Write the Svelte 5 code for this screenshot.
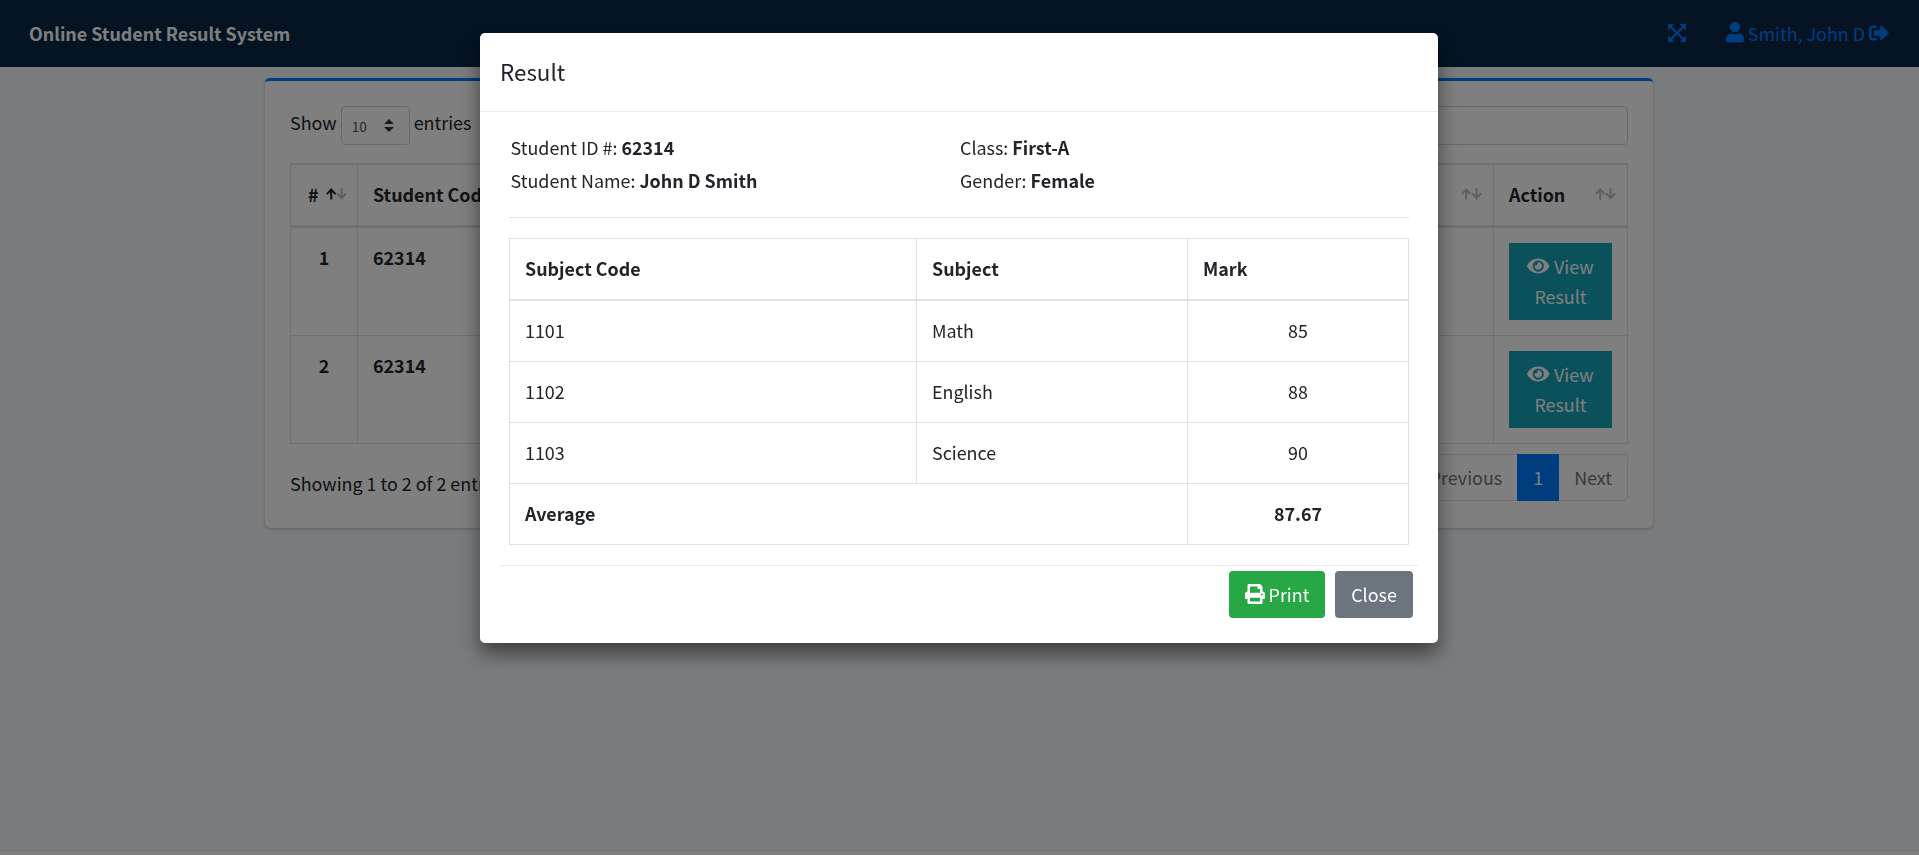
<script>
  const marks = [
    { code: '1101', subject: 'Math', mark: 85 },
    { code: '1102', subject: 'English', mark: 88 },
    { code: '1103', subject: 'Science', mark: 90 }
  ];
  const results = [
    { no: 1, code: '62314' },
    { no: 2, code: '62314' }
  ];
</script>

{#snippet sort(up)}
  <svg class="sort" width="21" height="12" viewBox="0 0 21 12" fill="none" stroke-width="2">
    <path d="M5.2 11.4V1.6M.8 6.1L5.2 1.5L9.6 6.1" stroke={up ? '#212529' : '#bcbdbe'} />
    <path d="M15.6 .2V10M11.2 5.5L15.6 10.1L20 5.5" stroke="#bcbdbe" />
  </svg>
{/snippet}

<div class="page">
  <header>
    <b class="brand">Online Student Result System</b>
    <nav>
      <svg class="expand" width="18" height="18" viewBox="0 0 18 18" fill="currentColor">
        <path d="M.6 0H6.2L.4 6.2L0 6V.6ZM17.4 0H11.8L17.6 6.2L18 6V.6ZM.6 18H6.2L.4 11.8L0 12V17.4ZM17.4 18H11.8L17.6 11.8L18 12V17.4Z" />
        <path d="M2.5 2.5L15.5 15.5M15.5 2.5L2.5 15.5" stroke="currentColor" stroke-width="2.3" />
      </svg>
      <svg class="user" width="18" height="20.5" viewBox="0 0 448 512" fill="currentColor"><path d="M224 256c70.7 0 128-57.3 128-128S294.7 0 224 0 96 57.3 96 128s57.3 128 128 128zm89.6 32h-16.7c-22.2 10.2-46.9 16-72.9 16s-50.6-5.8-72.9-16h-16.7C60.2 288 0 348.2 0 422.4V464c0 26.5 21.5 48 48 48h352c26.5 0 48-21.5 48-48v-41.6c0-74.2-60.2-134.4-134.4-134.4z" /></svg>
      <span class="name">Smith, John D</span>
      <svg width="20" height="20" viewBox="0 0 512 512" fill="currentColor"><path d="M497 273L329 441c-15 15-41 4.5-41-17v-96H152c-13.3 0-24-10.7-24-24v-96c0-13.3 10.7-24 24-24h136V88c0-21.4 25.9-32 41-17l168 168c9.3 9.4 9.3 24.6 0 34zM192 436v-40c0-6.6-5.4-12-12-12H96c-17.7 0-32-14.3-32-32V160c0-17.7 14.3-32 32-32h84c6.6 0 12-5.4 12-12V76c0-6.6-5.4-12-12-12H96c-53 0-96 43-96 96v192c0 53 43 96 96 96h84c6.6 0 12-5.4 12-12z" /></svg>
    </nav>
  </header>

  <main>
    <section class="card">
      <div class="controls">
        <span>Show</span>
        <div class="select">
          <span>10</span>
          <svg width="10" height="13" viewBox="0 0 10 13" fill="#343a40"><path d="M0 5L5 0L10 5ZM0 8H10L5 13Z" /></svg>
        </div>
        <span>entries</span>
        <input aria-label="Search" />
      </div>

      <table class="list">
        <colgroup><col style:width="67px" /><col style:width="240px" /><col /><col style:width="134px" /></colgroup>
        <thead>
          <tr>
            <th><div class="head first">#{@render sort(true)}</div></th>
            <th><div class="head">Student Code</div></th>
            <th><div class="head end">{@render sort(false)}</div></th>
            <th><div class="head">Action{@render sort(false)}</div></th>
          </tr>
        </thead>
        <tbody>
          {#each results as r}
            <tr>
              <td class="center"><b>{r.no}</b></td>
              <td><b>{r.code}</b></td>
              <td></td>
              <td>
                <button class="view">
                  <svg width="22.5" height="20" viewBox="0 0 576 512" fill="currentColor"><path d="M572.52 241.4C518.29 135.59 410.93 64 288 64S57.68 135.64 3.48 241.41a32.35 32.35 0 0 0 0 29.19C57.71 376.41 165.07 448 288 448s230.32-71.64 284.52-177.41a32.35 32.35 0 0 0 0-29.19zM288 400a144 144 0 1 1 144-144 143.93 143.93 0 0 1-144 144zm0-240a95.31 95.31 0 0 0-25.31 3.79 47.85 47.85 0 0 1-66.9 66.9A95.78 95.78 0 1 0 288 160z" /></svg>
                  <span>View</span>
                  <span>Result</span>
                </button>
              </td>
            </tr>
          {/each}
        </tbody>
      </table>

      <div class="bottom">
        <span class="info">Showing 1 to 2 of 2 entries</span>
        <div class="pager"><span>Previous</span><span class="active">1</span><span>Next</span></div>
      </div>
    </section>
  </main>
  <footer></footer>
</div>

<div class="backdrop">
  <div class="modal" role="dialog">
    <div class="modal-head">Result</div>
    <div class="facts">
      <div>Student ID #: <b>62314</b></div>
      <div>Class: <b>First-A</b></div>
      <div>Student Name: <b>John D Smith</b></div>
      <div>Gender: <b>Female</b></div>
    </div>
    <table class="marks">
      <colgroup><col style:width="407px" /><col style:width="271px" /><col /></colgroup>
      <thead>
        <tr><th>Subject Code</th><th>Subject</th><th>Mark</th></tr>
      </thead>
      <tbody>
        {#each marks as m}
          <tr><td>{m.code}</td><td>{m.subject}</td><td class="center">{m.mark}</td></tr>
        {/each}
        <tr><th colspan="2">Average</th><th class="center">87.67</th></tr>
      </tbody>
    </table>
    <div class="actions">
      <button class="btn print">
        <svg width="20" height="20" viewBox="0 0 512 512" fill="currentColor"><path d="M448 192V77.25c0-8.49-3.37-16.62-9.37-22.63L393.37 9.37c-6-6-14.14-9.37-22.63-9.37H96C78.33 0 64 14.33 64 32v160c-35.35 0-64 28.65-64 64v112c0 8.84 7.16 16 16 16h48v96c0 17.67 14.33 32 32 32h320c17.67 0 32-14.33 32-32v-96h48c8.84 0 16-7.16 16-16V256c0-35.35-28.65-64-64-64zm-64 256H128v-96h256v96zm0-224H128V64h192v48c0 8.84 7.16 16 16 16h48v96zm48 72c-13.25 0-24-10.75-24-24 0-13.26 10.75-24 24-24s24 10.74 24 24c0 13.25-10.75 24-24 24z" /></svg>
        <span>Print</span>
      </button>
      <button class="btn close">Close</button>
    </div>
  </div>
</div>

<style>
  :global(body) {
    margin: 0;
    overflow: hidden;
    font-family: 'Noto Sans CJK SC', 'Noto Sans', sans-serif;
    font-size: 17.9px;
    line-height: 30px;
    color: #212529;
  }
  * { box-sizing: border-box; }
  svg { display: block; flex: none; }
  button { font: inherit; border: 0; padding: 0; color: #fff; }
  .page { height: 855px; display: flex; flex-direction: column; background: #f4f6f9; }

  header {
    height: 67px;
    flex: none;
    display: flex;
    align-items: center;
    justify-content: space-between;
    padding: 0 30px 2px 29px;
    background: #0a2745;
    color: #007bff;
  }
  .brand { color: #fff; }
  nav { display: flex; align-items: center; }
  .expand { margin-right: 40px; }
  .name { margin: 0 4px; }

  main { flex: 1; padding: 11px 266px 0 265px; }
  .card {
    height: 450px;
    padding: 25px;
    background: #fff;
    border-top: 3px solid #007bff;
    border-radius: 5px;
    box-shadow: 0 0 1px rgba(0, 0, 0, 0.13), 0 1px 3px rgba(0, 0, 0, 0.2);
  }
  .controls { display: flex; gap: 4px; height: 57px; align-items: flex-start; }
  .controls > span { padding-top: 1px; }
  .select {
    width: 69px;
    height: 39px;
    display: flex;
    align-items: center;
    justify-content: space-between;
    padding: 0 15px 0 10px;
    border: 1px solid #ced4da;
    border-radius: 4px;
    font-size: 13.7px;
    color: #495057;
  }
  input {
    width: 260px;
    height: 39px;
    margin-left: auto;
    border: 1px solid #ced4da;
    border-radius: 4px;
    background: #fff;
  }
  footer { height: 5px; background: #fff; border-top: 1px solid #dee2e6; }

  table { border-spacing: 0; table-layout: fixed; width: 100%; }
  th, td {
    padding: 0 15px;
    text-align: left;
    border: 0 solid #dee2e6;
    border-width: 0 1px 1px 0;
  }
  .center { text-align: center; }
  .list { border-left: 1px solid #dee2e6; border-top: 2px solid #dee2e6; }
  .list th { height: 63px; border-bottom-width: 3px; padding-bottom: 2px; }
  .list td { height: 108px; padding-top: 15px; vertical-align: top; }
  .list td b { display: block; margin-top: -1px; }
  .head { display: flex; align-items: center; justify-content: space-between; margin-right: -4px; }
  .head.end { justify-content: flex-end; }
  .head.first { padding-left: 2px; margin-right: -5px; }
  .sort { margin-top: -1px; }
  .view {
    width: 103px;
    height: 77px;
    padding-bottom: 2px;
    display: flex;
    flex-wrap: wrap;
    align-items: center;
    align-content: center;
    justify-content: center;
    column-gap: 4px;
    background: #17a2b8;
    line-height: 30px;
  }
  .bottom { display: flex; justify-content: space-between; padding-top: 10px; }
  .info { padding-top: 14px; }
  .pager {
    display: flex;
    height: 47px;
    line-height: 47px;
    border: 1px solid #dee2e6;
    border-radius: 5px;
    color: #6c757d;
  }
  .pager span { padding: 0 15px; margin: -1px 0; }
  .pager .active { background: #007bff; color: #fff; padding: 0 16px; }

  .backdrop {
    position: fixed;
    inset: 0;
    padding-top: 33px;
    background: rgba(0, 0, 0, 0.5);
  }
  .modal {
    width: 958px;
    height: 610px;
    margin: 0 auto 0 480px;
    background: #fff;
    border-radius: 5px;
    box-shadow: 0 10px 20px rgba(0, 0, 0, 0.5);
  }
  .modal-head {
    height: 79px;
    padding: 0 20px;
    font-size: 22.4px;
    line-height: 76px;
    border-bottom: 1px solid #e9ecef;
  }
  .facts {
    display: grid;
    grid-template-columns: 449.5px 450px;
    grid-auto-rows: 33px;
    height: 106px;
    margin: 0 29px;
    padding: 20px 0 0 1.5px;
    border-bottom: 1px solid #e5e5e5;
  }
  .marks {
    width: 900px;
    margin: 20px 29px;
    border-left: 1px solid #dee2e6;
    border-top: 1px solid #dee2e6;
  }
  .marks th, .marks td { height: 61px; padding-bottom: 2px; }
  .marks thead th { height: 62px; border-bottom-width: 2px; }
  .actions {
    display: flex;
    justify-content: flex-end;
    gap: 10px;
    margin: 0 20px;
    padding: 5px 5px 0 0;
    border-top: 1px solid #e9ecef;
  }
  .btn {
    height: 47px;
    padding-bottom: 2px;
    display: flex;
    align-items: center;
    justify-content: center;
    gap: 4px;
    border-radius: 4px;
  }
  .btn svg { margin-top: 1px; }
  .print { width: 96px; background: #28a745; }
  .close { width: 78px; background: #6c757d; }
</style>
